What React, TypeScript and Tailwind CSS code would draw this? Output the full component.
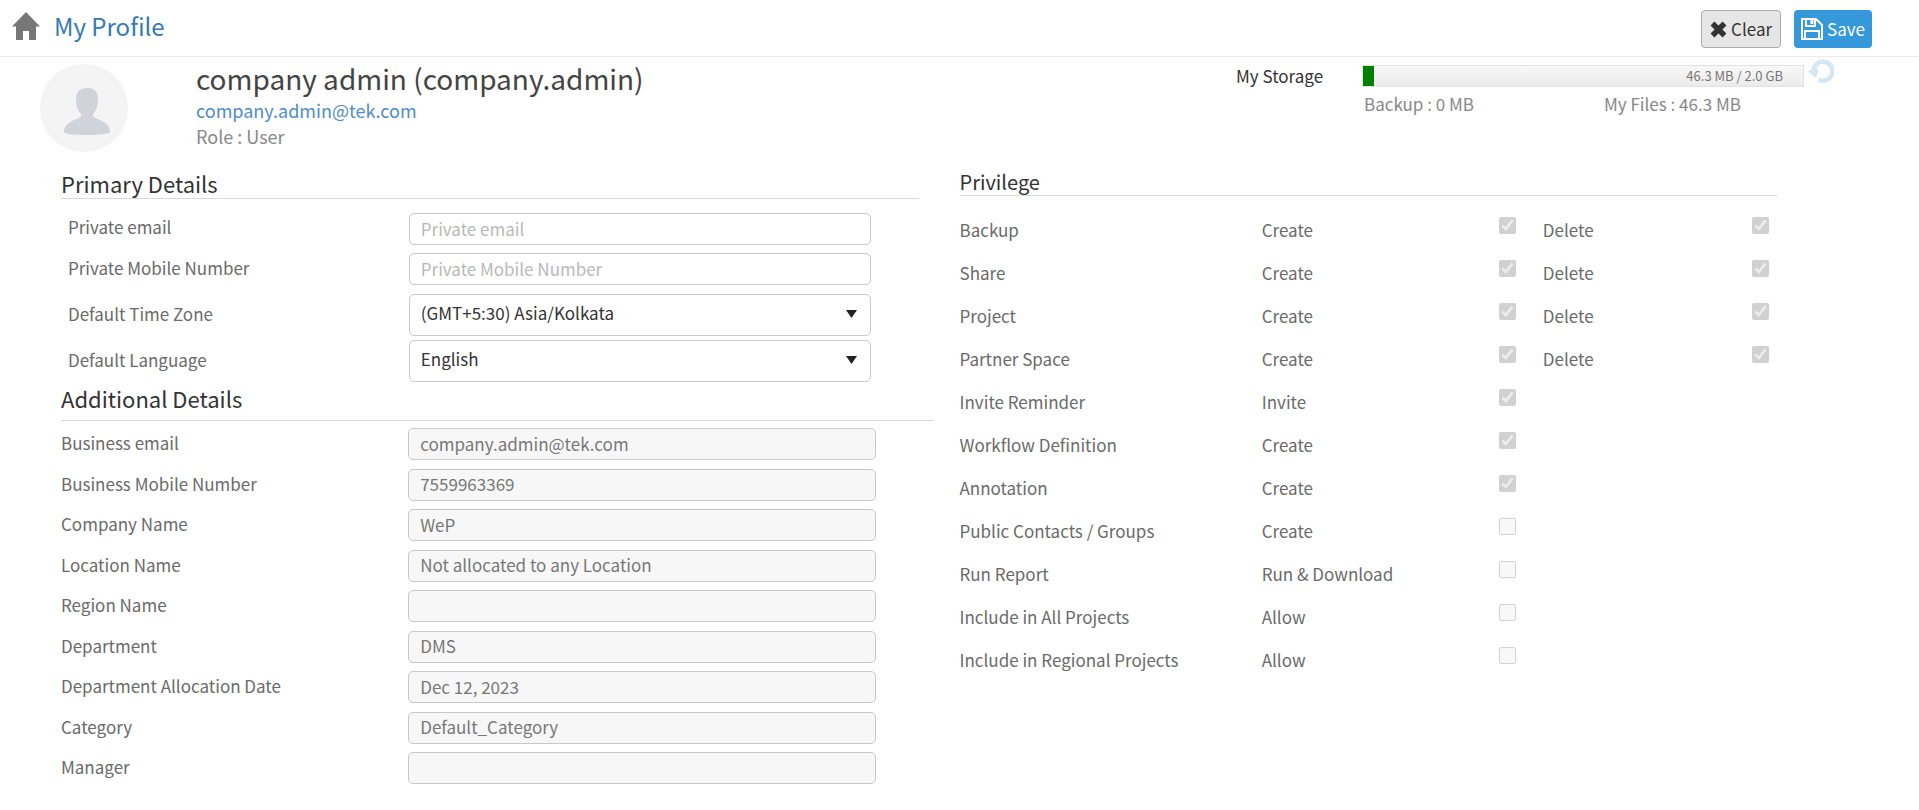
import { useState } from "react";

type Field = { id: string; label: string; value: string };

const businessFields: Field[] = [
  { id: "businessEmail", label: "Business email", value: "company.admin@tek.com" },
  { id: "businessMobile", label: "Business Mobile Number", value: "7559963369" },
  { id: "companyName", label: "Company Name", value: "WeP" },
  { id: "locationName", label: "Location Name", value: "Not allocated to any Location" },
  { id: "regionName", label: "Region Name", value: "" },
  { id: "department", label: "Department", value: "DMS" },
  { id: "allocationDate", label: "Department Allocation Date", value: "Dec 12, 2023" },
  { id: "category", label: "Category", value: "Default_Category" },
  { id: "manager", label: "Manager", value: "" },
];

type Privilege = { name: string; action: string; allowed: boolean; canDelete?: boolean };

const privileges: Privilege[] = [
  { name: "Backup", action: "Create", allowed: true, canDelete: true },
  { name: "Share", action: "Create", allowed: true, canDelete: true },
  { name: "Project", action: "Create", allowed: true, canDelete: true },
  { name: "Partner Space", action: "Create", allowed: true, canDelete: true },
  { name: "Invite Reminder", action: "Invite", allowed: true },
  { name: "Workflow Definition", action: "Create", allowed: true },
  { name: "Annotation", action: "Create", allowed: true },
  { name: "Public Contacts / Groups", action: "Create", allowed: false },
  { name: "Run Report", action: "Run & Download", allowed: false },
  { name: "Include in All Projects", action: "Allow", allowed: false },
  { name: "Include in Regional Projects", action: "Allow", allowed: false },
];

const inputClass =
  "h-8 w-full rounded-[5px] border border-[#c8c8c8] px-[11px] pb-0.5 text-[17px] placeholder:text-[#b9b9b9]";

const rowClass = "grid grid-cols-[348fr_462fr_48fr]";

function HomeIcon() {
  return (
    <svg viewBox="0 0 28 28" className="h-7 w-7" fill="#777" aria-hidden="true">
      <path d="M14 0 28 14.5h-4V28h-7v-9h-6v9H4V14.5H0z" />
    </svg>
  );
}

function ClearIcon() {
  return (
    <svg viewBox="0 0 17 17" className="h-[17px] w-[17px]" stroke="#333" strokeWidth="5.5" aria-hidden="true">
      <path d="M2.5 2.5l12 12M14.5 2.5l-12 12" />
    </svg>
  );
}

function SaveIcon() {
  return (
    <svg viewBox="0 0 22 22" className="h-[22px] w-[22px]" fill="none" stroke="#fff" strokeWidth="2" aria-hidden="true">
      <path d="M1 1h14l6 6v14H1zM4 21v-8h14v8M5 1v7h9V1" />
      <path d="M11 2v4" strokeWidth="3" />
    </svg>
  );
}

function ReloadIcon() {
  return (
    <svg viewBox="0 0 26 26" className="h-[26px] w-[26px]" aria-hidden="true">
      <path d="M5.5 12.5a9.5 9.5 0 1 1 5 8" fill="none" stroke="#d6e6f2" strokeWidth="4.5" />
      <path d="M0 12.5 8.5 8l2 5-3 6z" fill="#d6e6f2" />
    </svg>
  );
}

function Avatar() {
  return (
    <svg viewBox="0 0 88 88" className="h-[88px] w-[88px]" role="img" aria-label="Profile photo">
      <circle cx="44" cy="44" r="44" fill="#f4f4f4" />
      <path
        d="M47 24c8 0 11 4 11 12 0 6-2 11-5 14-1 3 2 4 7 6 7 3 10 7 10 12 0 2-10 3-23 3s-23-1-23-3c0-5 3-9 10-12 5-2 8-3 7-6-3-3-5-8-5-14 0-8 3-12 11-12z"
        fill="#d0d4da"
      />
    </svg>
  );
}

type SelectRowProps = { id: string; label: string; value: string };

function SelectRow({ id, label, value }: SelectRowProps) {
  return (
    <div className={`${rowClass} items-center`}>
      <label htmlFor={id} className="pb-0.5 pl-[7px]">
        {label}
      </label>
      <div className="relative">
        <select
          id={id}
          defaultValue={value}
          className="block h-[42px] w-full appearance-none rounded-[5px] border border-[#c8c8c8] bg-white px-[11px] pb-1 text-[17px] text-[#333]"
        >
          <option>{value}</option>
        </select>
        <svg viewBox="0 0 11 8" className="pointer-events-none absolute top-4 right-[14px] h-2 w-[11px]" fill="#222" aria-hidden="true">
          <path d="M0 0h11L5.5 8z" />
        </svg>
      </div>
    </div>
  );
}

type CheckProps = { label: string; checked: boolean };

function Check({ label, checked }: CheckProps) {
  return <input type="checkbox" aria-label={label} checked={checked} readOnly disabled className="mb-2 h-[17px] w-[17px] justify-self-start" />;
}

export default function App() {
  const [email, setEmail] = useState("");
  const [mobile, setMobile] = useState("");

  const clear = () => {
    setEmail("");
    setMobile("");
  };

  return (
    <div className="bg-white font-['Noto_Sans_CJK_SC','Noto_Sans',sans-serif] text-[17px] leading-6 text-[#6a6a6a]">
      <header className="flex h-[57px] items-center justify-between border-b border-[#ececec] pt-0.5 pr-[47px] pl-3">
        <div className="flex items-center gap-[14px] pb-1.5">
          <a href="#home" aria-label="Home">
            <HomeIcon />
          </a>
          <h1 className="text-[24px] text-[#337ab7]">My Profile</h1>
        </div>
        <div className="flex gap-[13px]">
          <button type="button" onClick={clear} className="flex h-[38px] items-center gap-1 rounded-[4px] border border-[#aaa] bg-[#e6e6e6] px-2 text-[#333]">
            <ClearIcon />
            Clear
          </button>
          <button type="button" className="flex h-[38px] items-center gap-1 rounded-[4px] bg-[#3498db] px-[7px] text-white">
            <SaveIcon />
            Save
          </button>
        </div>
      </header>

      <section className="flex h-[109px] justify-between pt-[7px] pr-[85px] pl-10">
        <div className="flex gap-[68px]">
          <Avatar />
          <div>
            <h2 className="text-[28px] leading-7 text-[#444]">company admin (company.admin)</h2>
            <a href="mailto:company.admin@tek.com" className="mt-1 block text-[18px] leading-7 text-[#4f8ccb]">
              company.admin@tek.com
            </a>
            <p className="text-[18px] text-[#888]">Role : User</p>
          </div>
        </div>
        <div className="flex">
          <span className="w-[126px] text-[#333]">My Storage</span>
          <div className="w-[442px]">
            <div className="mt-px flex h-[22px] border border-[#e2e2e2] bg-linear-to-b from-[#f8f8f8] to-[#ebebeb]">
              <div className="w-[11px] bg-[#008000]" />
              <span className="ml-auto pr-5 text-[13px] leading-5 text-[#777]">46.3 MB / 2.0 GB</span>
            </div>
            <div className="mt-[5px] grid grid-cols-[240px_1fr] pl-0.5 text-[#888]">
              <span>Backup : 0 MB</span>
              <span>My Files : 46.3 MB</span>
            </div>
          </div>
          <button type="button" aria-label="Refresh storage" className="-mt-[5px] ml-1 self-start">
            <ReloadIcon />
          </button>
        </div>
      </section>

      <main className="grid grid-cols-2">
        <div className="pl-[61px]">
          <section className="mr-[41px]">
            <h3 className="h-[33px] border-b border-[#d9d9d9] pt-[5px] text-[22px] text-[#333]">Primary Details</h3>
            <div className="mt-[14px] grid gap-2">
              <div className={rowClass}>
                <label htmlFor="privateEmail" className="pt-0.5 pl-[7px]">
                  Private email
                </label>
                <input
                  id="privateEmail"
                  type="email"
                  placeholder="Private email"
                  value={email}
                  onChange={(e) => setEmail(e.target.value)}
                  className={inputClass}
                />
              </div>
              <div className={rowClass}>
                <label htmlFor="privateMobile" className="pt-[3px] pl-[7px]">
                  Private Mobile Number
                </label>
                <input
                  id="privateMobile"
                  type="tel"
                  placeholder="Private Mobile Number"
                  value={mobile}
                  onChange={(e) => setMobile(e.target.value)}
                  className={inputClass}
                />
              </div>
            </div>
            <div className="mt-[9px] grid gap-1">
              <SelectRow id="timeZone" label="Default Time Zone" value="(GMT+5:30) Asia/Kolkata" />
              <SelectRow id="language" label="Default Language" value="English" />
            </div>
          </section>

          <section className="mr-[26px]">
            <h3 className="h-[39px] border-b border-[#d9d9d9] pt-1 text-[22px] text-[#333]">Additional Details</h3>
            <div className="mt-[7px] grid min-h-[356px] content-between">
              {businessFields.map((field) => (
                <div key={field.id} className="grid grid-cols-[347fr_468fr_57fr]">
                  <label htmlFor={field.id} className="pt-[3px]">
                    {field.label}
                  </label>
                  <input id={field.id} value={field.value} disabled className={`${inputClass} bg-[#f7f7f7] text-[#777]`} />
                </div>
              ))}
            </div>
          </section>
        </div>

        <section className="mr-[142px]">
          <h3 className="h-[30px] border-b border-[#d9d9d9] pt-1 text-[20px] text-[#333]">Privilege</h3>
          <div className="mt-3">
            {privileges.map((p) => (
              <div key={p.name} className="grid h-[43px] grid-cols-[302fr_237fr_44fr_209fr_25fr] items-center">
                <span>{p.name}</span>
                <span>{p.action}</span>
                <Check label={`${p.name} ${p.action}`} checked={p.allowed} />
                {p.canDelete && (
                  <>
                    <span>Delete</span>
                    <Check label={`${p.name} Delete`} checked />
                  </>
                )}
              </div>
            ))}
          </div>
        </section>
      </main>
    </div>
  );
}
